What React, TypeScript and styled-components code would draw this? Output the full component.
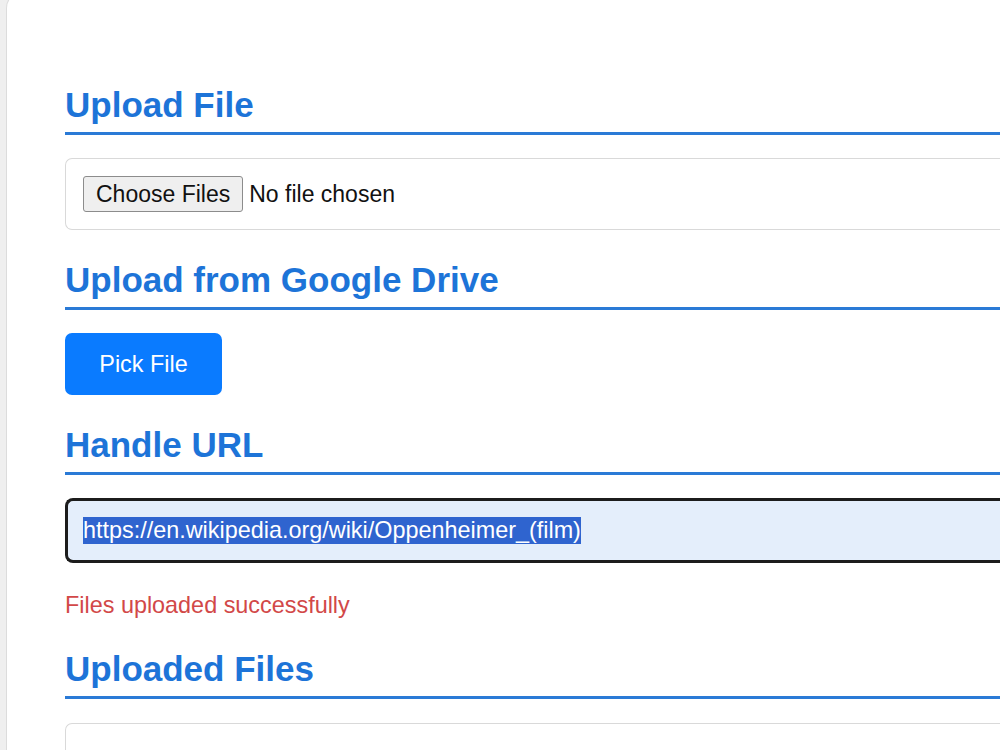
import React from "react";
import styled, { createGlobalStyle } from "styled-components";

const GlobalStyle = createGlobalStyle`
  html, body {
    margin: 0;
    padding: 0;
    background: #efefef;
    font-family: "Liberation Sans", Arial, sans-serif;
    overflow: hidden;
  }
`;

const Page = styled.div`
  padding-left: 6px;
  height: 750px;
  overflow: hidden;
`;

const Card = styled.main`
  margin-top: -8px;
  background: #ffffff;
  border-left: 1px solid #dcdcdc;
  border-top: 1px solid #dcdcdc;
  border-top-left-radius: 16px;
  padding: 92px 0 0 58px;
  min-height: 900px;
  display: flex;
  flex-direction: column;
`;

const Section = styled.section`
  display: flex;
  flex-direction: column;
  align-items: flex-start;
  & + & {
    margin-top: 30px;
  }
`;

const Heading = styled.h2`
  align-self: stretch;
  margin: 0;
  font-size: 35px;
  line-height: 40px;
  font-weight: 700;
  color: #1d74d8;
  padding-bottom: 7px;
  border-bottom: 3px solid #2a7ad6;
`;

const Body = styled.div<{ $gap?: number }>`
  align-self: stretch;
  margin-top: ${(p) => p.$gap ?? 23}px;
  display: flex;
  flex-direction: column;
  align-items: flex-start;
`;

const FileBox = styled.div`
  align-self: stretch;
  display: flex;
  align-items: center;
  gap: 6px;
  padding: 17px;
  height: 36px;
  border: 1px solid #d9d9d9;
  border-right: none;
  border-radius: 7px 0 0 7px;
  background: #fff;
`;

const ChooseButton = styled.button`
  height: 36px;
  padding: 0 12px;
  font-family: "Liberation Sans", Arial, sans-serif;
  font-size: 23px;
  color: #111;
  background: #efefef;
  border: 1px solid #8c8c8c;
  border-radius: 3px;
`;

const FileText = styled.span`
  font-size: 23px;
  color: #111;
`;

const PickButton = styled.button`
  width: 157px;
  height: 62px;
  font-family: "Liberation Sans", Arial, sans-serif;
  font-size: 23.4px;
  color: #ffffff;
  background: #0a7bff;
  border: none;
  border-radius: 7px;
`;

const UrlField = styled.div`
  align-self: stretch;
  box-sizing: border-box;
  height: 65px;
  display: flex;
  align-items: center;
  padding-left: 15px;
  border: 3px solid #1c1c1c;
  border-right: none;
  border-radius: 8px 0 0 8px;
  background: #e4eefb;
  font-size: 23.4px;
  color: #111;
`;

const Selected = styled.span`
  background: #2f64cf;
  color: #ffffff;
  line-height: 27px;
`;

const Message = styled.p`
  margin: 29px 0 0;
  font-size: 23.4px;
  line-height: 27px;
  color: #d24848;
`;

const ListBox = styled.div`
  align-self: stretch;
  height: 120px;
  border: 1px solid #d9d9d9;
  border-right: none;
  border-radius: 7px 0 0 7px;
  background: #fff;
`;

export default function App() {
  return (
    <>
      <GlobalStyle />
      <Page>
        <Card>
          <Section>
            <Heading>Upload File</Heading>
            <Body>
              <FileBox>
                <ChooseButton type="button">Choose Files</ChooseButton>
                <FileText>No file chosen</FileText>
              </FileBox>
            </Body>
          </Section>
          <Section>
            <Heading>Upload from Google Drive</Heading>
            <Body>
              <PickButton type="button">Pick File</PickButton>
            </Body>
          </Section>
          <Section>
            <Heading>Handle URL</Heading>
            <Body $gap={23}>
              <UrlField>
                <Selected>https://en.wikipedia.org/wiki/Oppenheimer_(film)</Selected>
              </UrlField>
              <Message>Files uploaded successfully</Message>
            </Body>
          </Section>
          <Section>
            <Heading>Uploaded Files</Heading>
            <Body $gap={24}>
              <ListBox />
            </Body>
          </Section>
        </Card>
      </Page>
    </>
  );
}
